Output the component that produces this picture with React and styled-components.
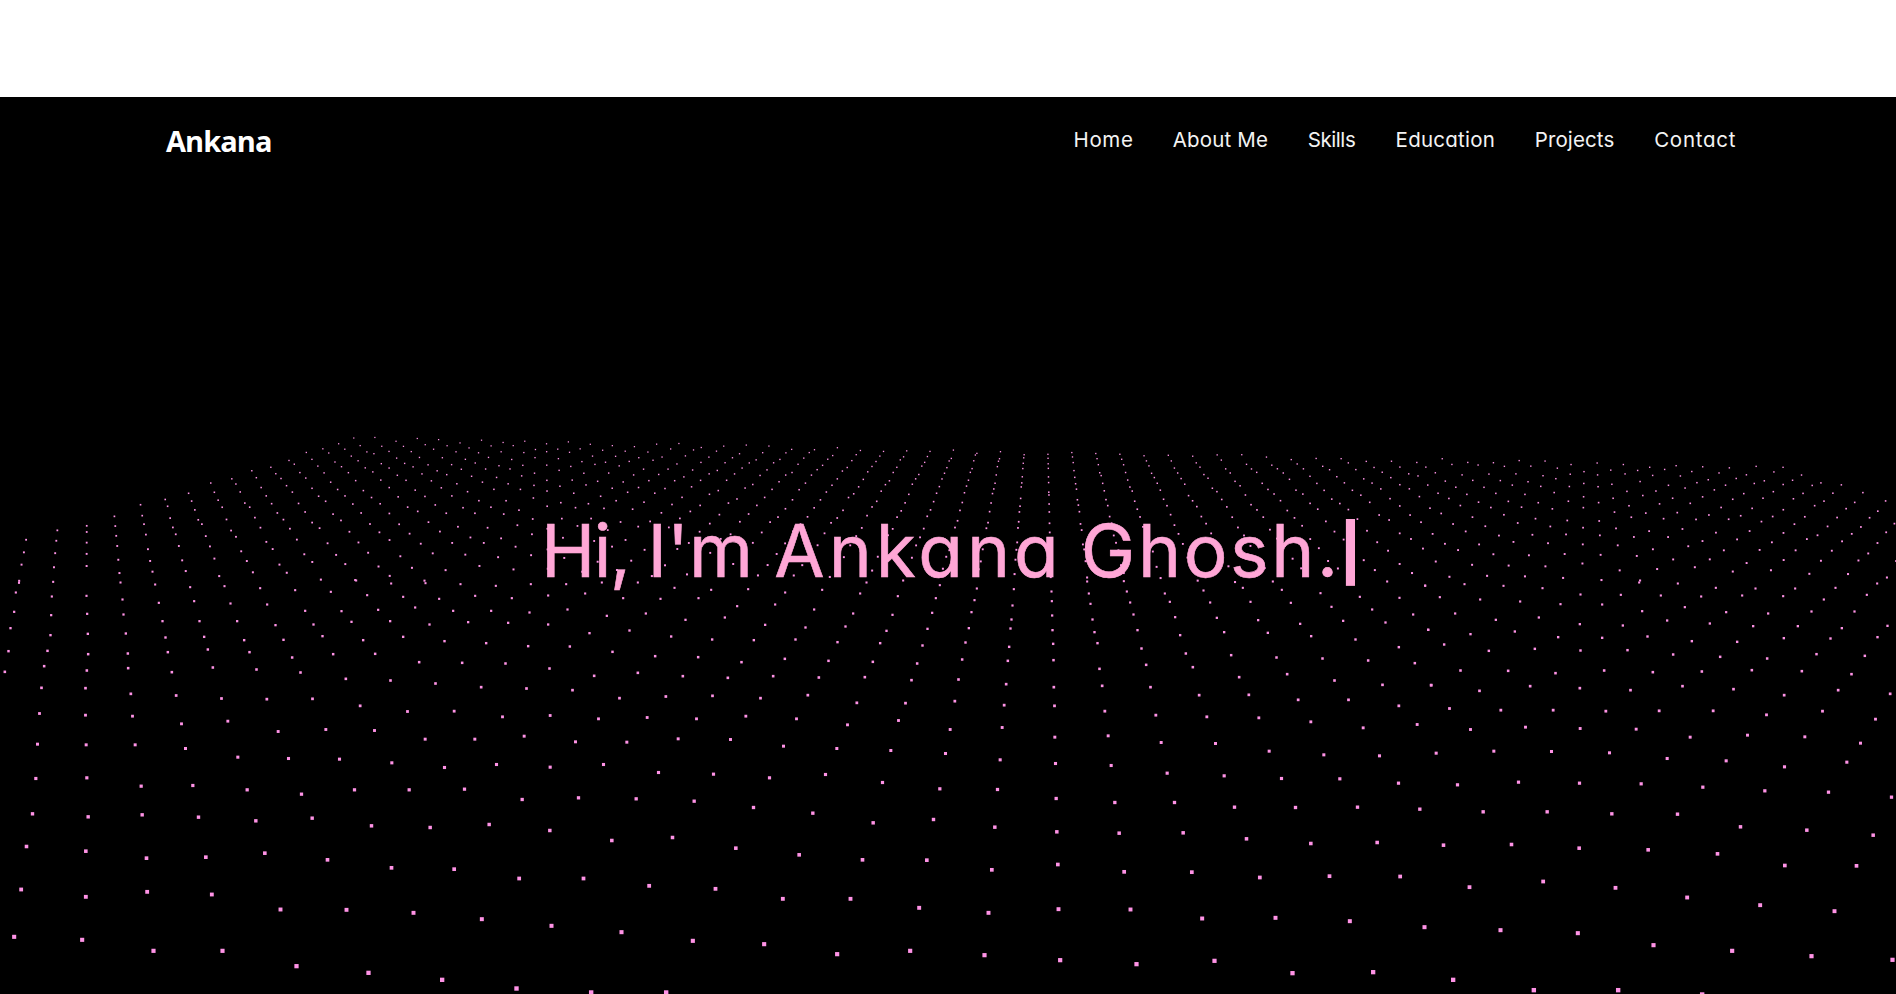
import React from "react";
import styled, { createGlobalStyle } from "styled-components";

const GlobalStyle = createGlobalStyle`
  * { box-sizing: border-box; }
  html, body { margin: 0; padding: 0; background: #fff; overflow: hidden; }
`;

const Page = styled.div`
  width: 1896px;
  height: 994px;
  padding-top: 97px;
  overflow: hidden;
`;

const Hero = styled.main`
  position: relative;
  height: 897px;
  background: #000;
  display: flex;
  flex-direction: column;
  overflow: hidden;
`;

const DotField = styled.svg`
  position: absolute;
  inset: 0;
  width: 1896px;
  height: 897px;
  fill: #ff93e6;
`;

const Header = styled.header`
  position: relative;
  display: flex;
  justify-content: space-between;
  align-items: flex-start;
  height: 64px;
  padding: 24px 160.5px 0 166px;
`;

const Logo = styled.a`
  font: 700 29px/40px "Open Sans", "Noto Sans", sans-serif;
  letter-spacing: -0.95px;
  color: #fff;
`;

const Nav = styled.nav`
  display: flex;
  gap: 39.9px;
  margin-top: 4px;
`;

const NavLink = styled.a`
  font: 400 20.5px/30px Inter, sans-serif;
  font-feature-settings: "cv11";
  letter-spacing: ${(p) => p.$track}px;
  margin-right: ${(p) => -p.$track}px;
  color: #f3f3f3;
  white-space: nowrap;
`;

const Title = styled.h1`
  position: relative;
  margin: 340px 0 0 541px;
  display: flex;
  font: 400 73px/100px Inter, sans-serif;
  font-feature-settings: "cv11";
  -webkit-text-stroke: 0.6px #ffa6d6;
  color: #ffa6d6;
`;

const Word = styled.span`
  letter-spacing: ${(p) => p.$track}px;
  margin-right: ${(p) => p.$gap}px;
  white-space: pre;
`;

const Cursor = styled.span`
  font: 700 71px/90px "Liberation Sans", Arial, sans-serif;
  -webkit-text-stroke: 0;
`;

const LINKS = [
  ["Home", 0.65],
  ["About Me", 0.15],
  ["Skills", -0.45],
  ["Education", 0.25],
  ["Projects", 0.1],
  ["Contact", 0.75],
];

// Rolling dots in the foreground, as x,y pairs in thirds of a pixel from each tile's origin.
const TILES = [
  { ox: 0, oy: 420, pts: "57,482 47,517 42,575 31,624 25,693 14,755 159,485 155,529 153,585 151,645 142,692 132,738 124,803 259,527 261,581 263,641 264,702 260,751 256,804 361,487 367,538 370,583 377,640 383,700 384,744 392,821 465,493 476,548 487,603 496,652 503,696 515,756 528,826 570,501 582,543 598,603 612,650 623,688 638,742 664,835 673,498 691,550 711,603 732,660 748,696 769,748 800,837 780,504 801,553 826,615 850,659 876,712 901,757 937,836 885,510 915,572 940,613 967,648 999,702 1037,776 1080,857 992,515 1024,573 1054,605 1089,660 1125,701 1171,781 1068,481 1101,525 1134,569 1170,603 1209,650 1257,726 1306,790 1173,490 1209,530 1245,562 1288,613 1333,663 1386,728 1276,489 1317,536 1359,572 1404,606 1381,492 1425,527" },
  { ox: 480, oy: 420, pts: "3,801 18,669 33,572 47,497 76,730 84,608 95,534 139,805 144,678 148,577 152,492 208,745 204,613 204,526 277,810 269,679 262,568 258,492 342,767 328,639 315,520 418,834 397,695 380,587 365,487 473,758 448,631 429,534 557,829 525,708 497,580 473,487 608,768 573,649 541,536 697,827 654,711 616,599 583,503 743,773 696,658 655,534 841,834 784,726 734,592 693,509 879,768 821,660 771,558 983,825 914,716 855,614 804,507 1016,772 946,658 885,553 1130,848 1045,722 976,622 915,517 1154,771 1072,666 1002,568 1276,849 1178,725 1096,619 1026,509 1294,780 1200,669 1119,580 1424,843 1311,730 1219,632 1140,520 1435,778 1327,676 1237,584 1159,487 1342,626 1253,528 1356,578 1367,534 1379,495 1269,481" },
  { ox: 960, oy: 420, pts: "50,505 43,540 34,576 26,624 16,667 6,718 161,507 157,556 154,598 151,625 147,680 143,722 138,792 132,855 274,514 275,543 276,586 277,630 279,671 280,720 281,801 283,857 381,484 386,520 391,551 397,598 403,636 412,669 418,746 426,797 491,483 500,514 510,547 520,583 532,630 544,685 558,734 571,801 614,520 629,545 645,591 660,645 677,700 698,741 717,825 730,511 750,547 770,593 792,636 813,705 837,771 866,824 848,503 871,545 894,600 923,638 949,712 981,762 1014,839 938,484 965,509 992,548 1020,611 1053,648 1087,715 1123,781 1165,839 1081,519 1114,560 1149,602 1186,658 1224,721 1267,794 1316,857 1199,530 1236,568 1276,607 1316,681 1364,729 1413,795 1281,484 1318,533 1359,583 1404,629 1395,496" },
  { ox: 1416, oy: 420, pts: "27,497 36,629 45,795 71,531 84,673 117,580 133,751 145,492 163,642 190,812 192,538 218,692 239,599 276,752 262,497 296,634 342,798 312,544 356,686 368,592 418,759 379,504 426,651 491,804 433,552 491,612 493,523 493,691 564,751 558,653 558,553 643,810 634,690 620,616 614,524 710,756 694,649 678,573 669,487 799,798 771,703 753,601 734,526 857,754 827,663 806,561 785,490 952,807 912,710 881,610 855,529 1104,825 1007,750 963,665 930,576 899,503 1053,715 1011,618 978,526 1157,753 1103,654 1056,580 1018,505 1266,810 1201,702 1145,618 1101,528 1306,762 1243,655 1186,574 1137,505 1422,821 1346,707 1277,624 1223,538 1384,651 1315,574 1258,503 1414,617 1352,524 1383,490" },
  { ox: 0, oy: 707, pts: "118,19 256,24 397,27 544,50 683,42 834,73 977,67 1123,70 1222,13 1362,12 1275,96 1424,96 112,111 258,113 405,113 556,124 713,150 865,154 1018,156 1175,167 1333,181 107,214 260,212 423,237 578,235 741,248 904,261 1063,248 1227,248 1393,246 97,320 264,329 426,323 595,330 767,341 936,333 1114,356 1290,361 79,418 257,432 439,453 617,450 794,438 982,458 1174,482 1362,486 63,547 257,569 441,554 635,562 841,607 1039,608 1240,617 42,689 246,698 460,731 667,731 889,777 1105,797 1326,818" },
  { ox: 480, oy: 707, pts: "67,29 210,25 355,35 501,31 649,35 797,27 949,35 1102,53 1255,40 1410,67 132,87 286,104 440,105 594,95 751,97 910,117 1070,124 1232,130 1396,139 49,172 210,180 370,172 535,196 700,201 868,212 1036,202 1207,226 1379,245 126,277 295,272 468,275 642,282 820,301 998,318 1179,347 1360,337 27,352 209,370 395,400 577,391 767,423 957,443 1147,458 1340,459 117,514 310,514 507,536 706,545 908,575 1111,575 1317,602 5,636 214,656 424,675 638,701 852,711 1071,741 1290,731 109,844 333,856 558,856" },
  { ox: 960, oy: 707, pts: "434,12 587,24 740,29 896,32 1052,44 1209,62 1371,52 126,61 284,90 444,86 603,106 766,109 927,132 1091,143 1258,146 1428,138 120,158 286,169 453,175 621,198 792,206 964,214 1139,215 1315,228 112,247 288,274 464,286 643,286 823,300 1006,301 1192,300 1379,306 104,360 290,374 477,378 669,377 859,395 1052,409 1251,406 95,488 293,472 492,494 695,495 899,511 1108,507 1320,508 85,617 295,606 511,607 726,634 946,632 1169,642 1393,660 73,744 300,759 529,771 763,761 997,798 1239,795" },
  { ox: 1416, oy: 707, pts: "100,4 254,9 411,9 569,12 729,11 891,11 1051,23 1219,12 1378,36 163,67 328,60 492,64 660,66 822,90 994,84 1166,89 1333,108 233,132 406,133 580,137 753,154 930,161 1105,179 1292,165 124,233 307,225 490,228 675,230 860,240 1046,251 1237,255 1426,270 201,314 393,314 587,320 784,321 973,359 1172,369 1371,384 82,414 286,412 489,423 696,428 904,440 1106,475 1321,476 160,540 381,523 598,542 813,571 1032,594 1255,612 253,669 485,678 712,714 948,731 1186,747 1429,758 111,818 353,849 606,849 858,862" },
];

const HORIZON = 221;
const NEAR_EDGE = 580;

function noise(i, j) {
  const v = Math.sin(i * 127.1 + j * 311.7) * 43758.5453;
  return v - Math.floor(v) - 0.5;
}

function buildDots() {
  const dots = [];
  for (let row = 8; row <= 30; row++) {
    for (let col = -31; col <= 29; col++) {
      const depth = 12.746 + 0.9285 * row - 0.084 * col;
      const base = HORIZON + 9420 / depth;
      if (base > NEAR_EDGE) continue;
      const x = 1042.6 + (967 * (col + 0.224)) / depth;
      dots.push([x, base + (noise(row, col) * 180) / depth]);
    }
  }
  TILES.forEach(({ ox, oy, pts }) => {
    pts.split(" ").forEach((p) => {
      const [x, y] = p.split(",").map(Number);
      const py = oy + (y + 0.5) / 3;
      if (py > NEAR_EDGE) dots.push([ox + (x + 0.5) / 3, py]);
    });
  });
  return dots;
}

const DOTS = buildDots();

export default function App() {
  return (
    <Page>
      <GlobalStyle />
      <Hero>
        <DotField viewBox="0 97 1896 897">
          {DOTS.map(([x, y], i) => {
            const s = (y - HORIZON) * 0.0057;
            return <rect key={i} x={x - s / 2} y={y - s / 2} width={s} height={s} />;
          })}
        </DotField>
        <Header>
          <Logo>Ankana</Logo>
          <Nav>
            {LINKS.map(([label, track]) => (
              <NavLink key={label} $track={track}>{label}</NavLink>
            ))}
          </Nav>
        </Header>
        <Title>
          <Word $track={-1.5} $gap={18}>Hi,</Word>
          <Word $track={0} $gap={21.4}>I'm</Word>
          <Word $track={4} $gap={18.1}>Ankana</Word>
          <Word $track={2.6} $gap={0}>Ghosh.</Word>
          <Cursor>|</Cursor>
        </Title>
      </Hero>
    </Page>
  );
}
